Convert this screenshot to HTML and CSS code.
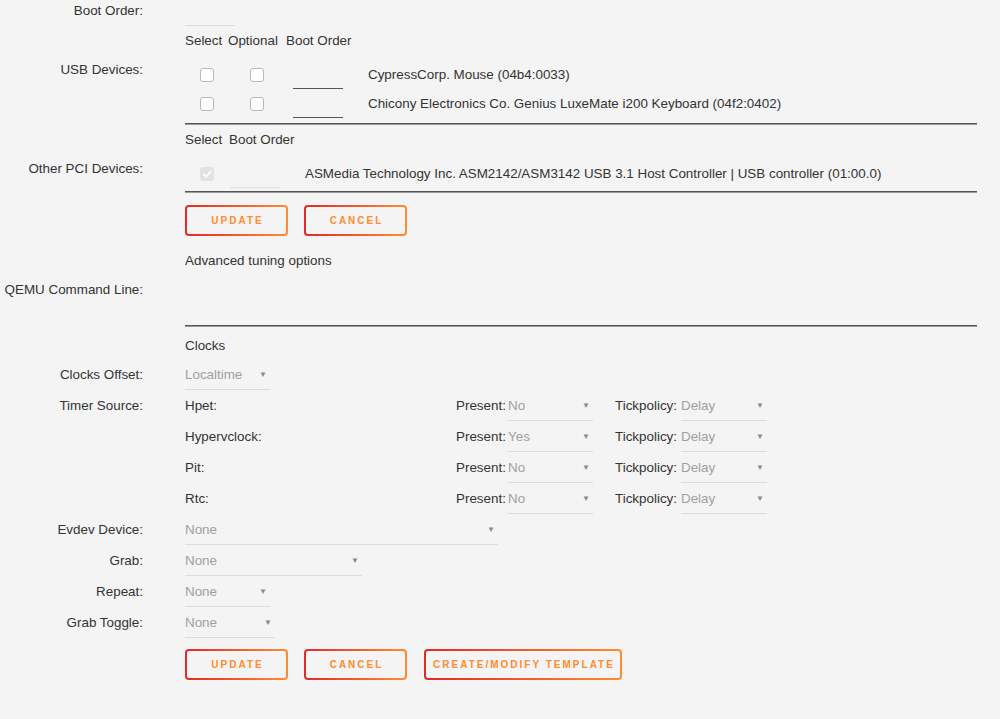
FILE: index.html
```html
<!DOCTYPE html>
<html>
<head>
<meta charset="utf-8">
<title>VM Settings</title>
<link rel="stylesheet" href="styles.css">
</head>
<body>
<div class="form">

  <div class="row boot-row">
    <div class="lbl">Boot Order:</div>
    <div class="val"><div class="field light w50"></div></div>
  </div>

  <div class="row hdr">
    <div class="lbl"></div>
    <div class="val usb-grid">
      <span>Select</span><span>Optional</span><span>Boot Order</span><span></span>
    </div>
  </div>

  <div class="row">
    <div class="lbl">USB Devices:</div>
    <div class="val devbox">
      <div class="usb-grid dev-row">
        <span class="cc"><span class="cb"></span></span>
        <span class="cc"><span class="cb"></span></span>
        <span><span class="field dark w50 ml7"></span></span>
        <span class="name">CypressCorp. Mouse (04b4:0033)</span>
      </div>
      <div class="usb-grid dev-row">
        <span class="cc"><span class="cb"></span></span>
        <span class="cc"><span class="cb"></span></span>
        <span><span class="field dark w50 ml7"></span></span>
        <span class="name">Chicony Electronics Co. Genius LuxeMate i200 Keyboard (04f2:0402)</span>
      </div>
    </div>
  </div>

  <div class="row hdr hdr2">
    <div class="lbl"></div>
    <div class="val pci-grid">
      <span>Select</span><span>Boot Order</span><span></span>
    </div>
  </div>

  <div class="row">
    <div class="lbl">Other PCI Devices:</div>
    <div class="val devbox pcibox">
      <div class="pci-grid dev-row">
        <span class="cc"><span class="cb checked"><svg viewBox="0 0 14 14" width="14" height="14"><path d="M3.5 7.2 L6 9.6 L10.6 4.6" fill="none" stroke="#fff" stroke-width="1.8" stroke-linecap="round" stroke-linejoin="round"/></svg></span></span>
        <span><span class="field light w50 ml1"></span></span>
        <span class="name">ASMedia Technology Inc. ASM2142/ASM3142 USB 3.1 Host Controller | USB controller (01:00.0)</span>
      </div>
    </div>
  </div>

  <div class="row btn-row">
    <div class="lbl"></div>
    <div class="val buttons">
      <button class="btn w103">Update</button>
      <button class="btn w103">Cancel</button>
    </div>
  </div>

  <div class="row adv-row">
    <div class="lbl"></div>
    <div class="val">Advanced tuning options</div>
  </div>

  <div class="row">
    <div class="lbl">QEMU Command Line:</div>
    <div class="val"><div class="textarea"></div></div>
  </div>

  <div class="row clocks-row">
    <div class="lbl"></div>
    <div class="val">Clocks</div>
  </div>

  <div class="row srow">
    <div class="lbl">Clocks Offset:</div>
    <div class="val"><div class="select w85"><span>Localtime</span><i>&#9660;</i></div></div>
  </div>

  <div class="row">
    <div class="lbl">Timer Source:</div>
    <div class="val timers">
      <div class="trow">
        <span class="tname">Hpet:</span>
        <span class="tl1">Present:</span>
        <div class="select w85"><span>No</span><i>&#9660;</i></div>
        <span class="tl2">Tickpolicy:</span>
        <div class="select w86"><span>Delay</span><i>&#9660;</i></div>
      </div>
      <div class="trow">
        <span class="tname">Hypervclock:</span>
        <span class="tl1">Present:</span>
        <div class="select w85"><span>Yes</span><i>&#9660;</i></div>
        <span class="tl2">Tickpolicy:</span>
        <div class="select w86"><span>Delay</span><i>&#9660;</i></div>
      </div>
      <div class="trow">
        <span class="tname">Pit:</span>
        <span class="tl1">Present:</span>
        <div class="select w85"><span>No</span><i>&#9660;</i></div>
        <span class="tl2">Tickpolicy:</span>
        <div class="select w86"><span>Delay</span><i>&#9660;</i></div>
      </div>
      <div class="trow">
        <span class="tname">Rtc:</span>
        <span class="tl1">Present:</span>
        <div class="select w85"><span>No</span><i>&#9660;</i></div>
        <span class="tl2">Tickpolicy:</span>
        <div class="select w86"><span>Delay</span><i>&#9660;</i></div>
      </div>
    </div>
  </div>

  <div class="row srow">
    <div class="lbl">Evdev Device:</div>
    <div class="val"><div class="select w313"><span>None</span><i>&#9660;</i></div></div>
  </div>

  <div class="row srow">
    <div class="lbl">Grab:</div>
    <div class="val"><div class="select w177"><span>None</span><i>&#9660;</i></div></div>
  </div>

  <div class="row srow">
    <div class="lbl">Repeat:</div>
    <div class="val"><div class="select w85"><span>None</span><i>&#9660;</i></div></div>
  </div>

  <div class="row srow">
    <div class="lbl">Grab Toggle:</div>
    <div class="val"><div class="select w90"><span>None</span><i>&#9660;</i></div></div>
  </div>

  <div class="row btn-row2">
    <div class="lbl"></div>
    <div class="val buttons">
      <button class="btn w103">Update</button>
      <button class="btn w103">Cancel</button>
      <button class="btn w198">Create/Modify Template</button>
    </div>
  </div>

</div>
</body>
</html>
```

FILE: styles.css
```css
html, body {
  margin: 0;
  padding: 0;
  background: #f4f4f4;
}
body {
  font-family: "Liberation Sans", Arial, sans-serif;
  font-size: 13.4px;
  color: #333;
  overflow: hidden;
}
.form {
  margin-top: -4px;
  width: 977px;
}
.row {
  display: grid;
  grid-template-columns: 143px 1fr;
  column-gap: 42px;
}
.lbl {
  text-align: right;
  line-height: 30px;
  white-space: nowrap;
}
.val {
  line-height: 30px;
  min-width: 0;
}

.boot-row { height: 31px; }
.field {
  display: block;
  box-sizing: border-box;
  height: 30px;
}
.field.light { border-bottom: 1px solid #dcdcdc; }
.field.dark { border-bottom: 1px solid #555; height: 22px; margin-top: 7px; }
.pcibox .field.light { height: 22px; margin-top: 7px; border-bottom-color: #dedede; }
.w50 { width: 50px; }
.ml7 { margin-left: 7px; }
.ml1 { margin-left: 1px; }

.hdr .lbl, .hdr .val { line-height: 28px; height: 28px; }
.hdr2 { margin-top: 1px; }

.usb-grid {
  display: grid;
  grid-template-columns: 43px 58px 82px 1fr;
}
.pci-grid {
  display: grid;
  grid-template-columns: 44px 76px 1fr;
}
.devbox {
  padding: 5px 0 5px;
  border-bottom: 1px solid #555;
  box-shadow: 0 1px 0 #9a9a9a;
  margin-bottom: 1px;
}
.pcibox { padding-bottom: 3px; }
.dev-row {
  height: 29px;
  line-height: 29px;
  align-items: start;
}
.cc {
  display: flex;
  justify-content: center;
  align-items: center;
  height: 29px;
}
.cb {
  display: block;
  width: 12px;
  height: 12px;
  background: #fff;
  border: 1px solid #b8b8b8;
  border-radius: 3px;
}
.cb.checked {
  width: 14px;
  height: 14px;
  border: none;
  background: #e2e2e2;
}
.cb svg { display: block; }
.name { white-space: nowrap; }

.btn-row { margin-top: 12px; }
.buttons {
  display: flex;
  gap: 16px;
  line-height: normal;
}
.btn {
  box-sizing: border-box;
  height: 31px;
  padding: 0 0 0 2px;
  border: 2px solid transparent;
  border-radius: 4px;
  background: linear-gradient(#f4f4f4, #f4f4f4) padding-box,
              linear-gradient(90deg, #e22828, #ff8c2f) border-box;
  color: #ff8c2f;
  font-family: "Liberation Sans", Arial, sans-serif;
  font-weight: bold;
  font-size: 10px;
  letter-spacing: 2px;
  text-transform: uppercase;
}
.w103 { width: 103px; }
.w198 { width: 198px; margin-left: 1px; }

.adv-row { margin-top: 10px; height: 29px; }
.textarea {
  box-sizing: border-box;
  height: 51px;
  border-bottom: 1px solid #555;
  box-shadow: 0 1px 0 #9a9a9a;
}
.clocks-row { margin-top: 5px; height: 29px; }

.srow { height: 31px; }
.select {
  box-sizing: border-box;
  height: 30px;
  line-height: 29px;
  border-bottom: 1px solid #dcdcdc;
  display: flex;
  justify-content: space-between;
  color: #a0a0a0;
}
.select i {
  font-style: normal;
  font-size: 8px;
  color: #8a8a8a;
  margin-right: 3px;
}
.w85 { width: 85px; }
.w86 { width: 86px; }
.w90 { width: 90px; }
.w177 { width: 177px; }
.w313 { width: 313px; }

.timers { line-height: 30px; }
.trow {
  display: flex;
  height: 31px;
}
.tname { width: 271px; }
.tl1 { width: 52px; }
.tl2 { width: 66px; margin-left: 22px; }

.btn-row2 { margin-top: 10px; }
```
